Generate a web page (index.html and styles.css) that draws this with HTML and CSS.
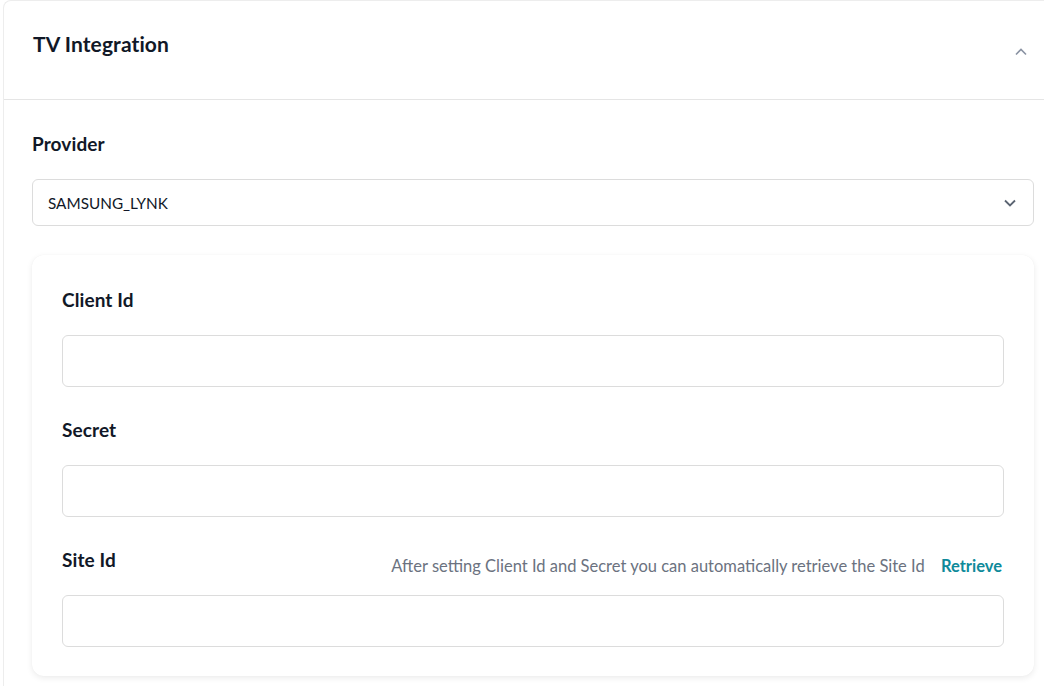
FILE: index.html
```html
<!DOCTYPE html>
<html>
<head>
<meta charset="utf-8">
<link rel="stylesheet" href="styles.css">
</head>
<body>
<div class="panel">
  <div class="panel-header">
    <h2 class="panel-title">TV Integration</h2>
    <svg class="chev-up" width="14" height="14" viewBox="0 0 14 14"><path d="M2 9.5 L7 4.5 L12 9.5" fill="none" stroke="#8a93a3" stroke-width="1.6"/></svg>
  </div>
  <div class="panel-body">
    <div class="field-label">Provider</div>
    <div class="select">
      <span>SAMSUNG_LYNK</span>
      <svg width="16" height="16" viewBox="0 0 16 16"><path d="M3 5.5 L8 10.5 L13 5.5" fill="none" stroke="#5b6472" stroke-width="1.8"/></svg>
    </div>
    <div class="card">
      <div class="field">
        <div class="field-label">Client Id</div>
        <div class="input"></div>
      </div>
      <div class="field">
        <div class="field-label">Secret</div>
        <div class="input"></div>
      </div>
      <div class="field">
        <div class="label-row">
          <div class="field-label">Site Id</div>
          <div class="hint">After setting Client Id and Secret you can automatically retrieve the Site Id <a class="retrieve">Retrieve</a></div>
        </div>
        <div class="input"></div>
      </div>
    </div>
  </div>
</div>
</body>
</html>
```

FILE: styles.css
```css
html, body {
  margin: 0;
  padding: 0;
  background: #ffffff;
  overflow: hidden;
}
body {
  font-family: Lato, "Noto Sans", sans-serif;
  color: #111827;
}
.panel {
  margin-left: 3px;
  width: 1060px;
  border: 1px solid #ededed;
  border-right: none;
  border-bottom: none;
  border-radius: 8px 0 0 0;
  background: #fff;
}
.panel-header {
  height: 98px;
  display: flex;
  align-items: center;
  justify-content: space-between;
  padding: 0 36px 0 29px;
  border-bottom: 1px solid #e5e5e5;
}
.panel-title {
  margin: 0;
  font-size: 21px;
  font-weight: 700;
  letter-spacing: 0.1px;
  color: #111827;
  position: relative;
  top: -7px;
}
.chev-up {
  position: relative;
  top: 2px;
}
.panel-body {
  padding: 31px 0 30px 28px;
  width: 1002px;
}
.field-label {
  font-size: 19px;
  font-weight: 700;
  letter-spacing: 0.1px;
  color: #111827;
  line-height: 26px;
}
.select {
  margin-top: 22px;
  height: 45px;
  border: 1px solid #dcdcdc;
  border-radius: 6px;
  display: flex;
  align-items: center;
  justify-content: space-between;
  padding: 0 15px 0 15px;
  font-size: 15.3px;
  color: #111827;
}
.card {
  margin-top: 29px;
  border-radius: 12px;
  box-shadow: 0 2px 6px rgba(0,0,0,0.08), 0 0 1px rgba(0,0,0,0.05);
  padding: 32px 30px 29px 30px;
  display: flex;
  flex-direction: column;
  gap: 30px;
}
.field {
  display: flex;
  flex-direction: column;
  gap: 22px;
}
.label-row {
  display: flex;
  justify-content: space-between;
  align-items: center;
  padding-right: 2px;
}
.hint {
  font-size: 16.5px;
  color: #6b7280;
  position: relative;
  top: 6px;
}
.retrieve {
  color: #0e8a9a;
  font-weight: 700;
  margin-left: 12px;
  cursor: pointer;
}
.input {
  height: 50px;
  border: 1px solid #dcdcdc;
  border-radius: 6px;
}
```
